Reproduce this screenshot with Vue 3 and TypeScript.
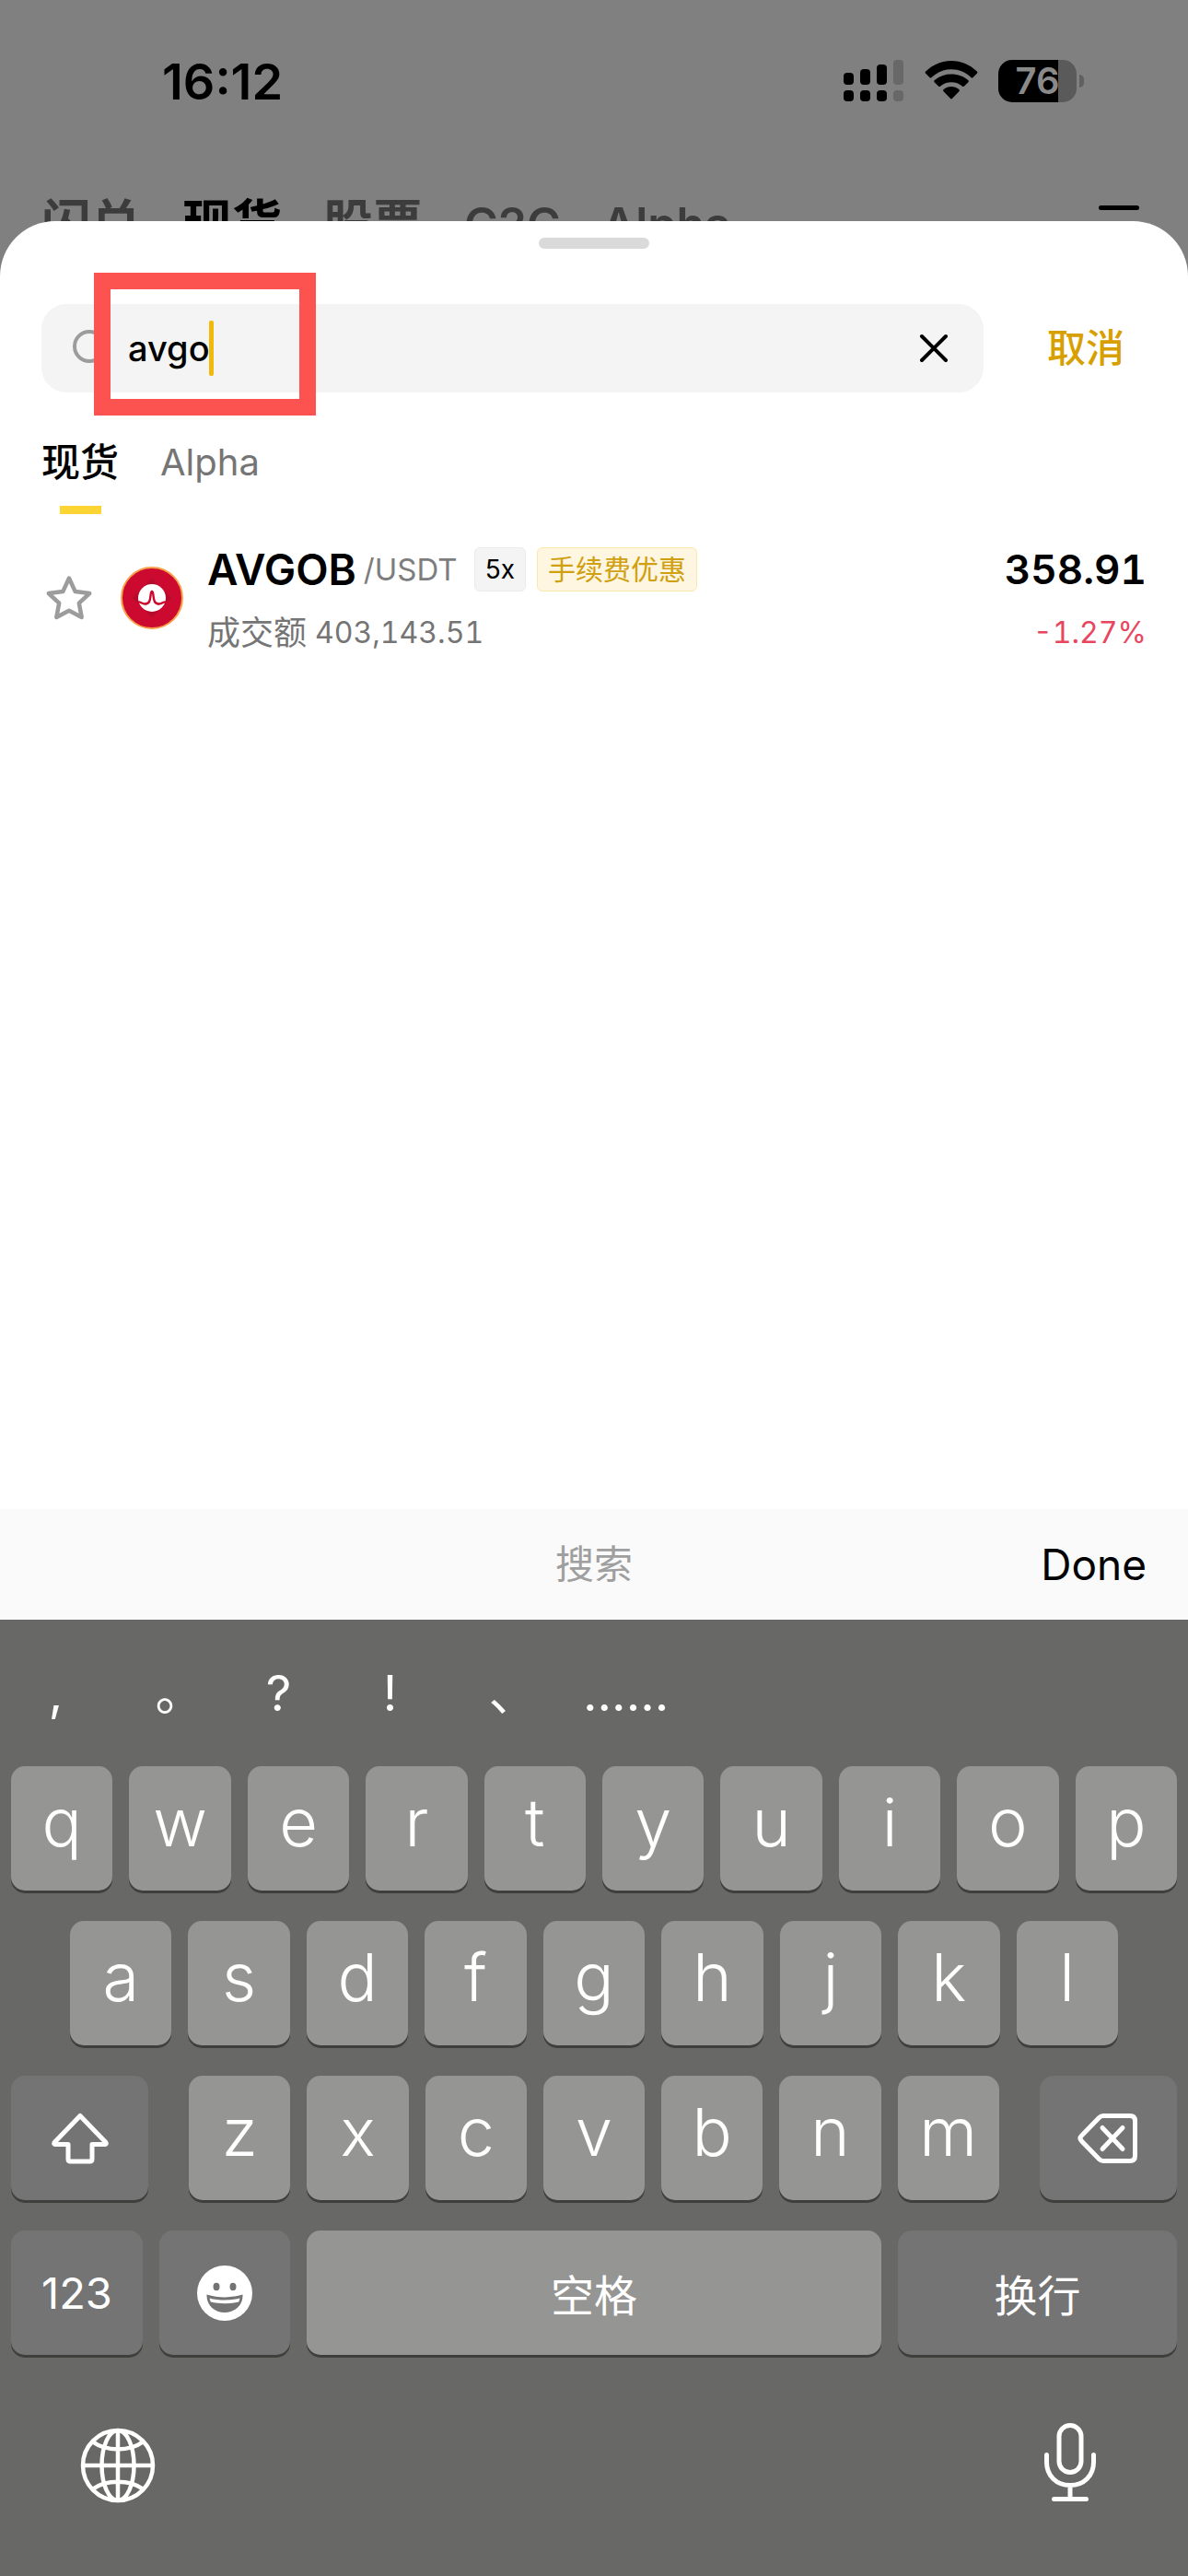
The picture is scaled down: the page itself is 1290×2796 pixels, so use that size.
<script setup lang="ts">
import { ref } from 'vue'

interface PageTab {
  label: string
  latin?: boolean
}

interface Pair {
  base: string
  quote: string
  leverage: string
  promo: string
  volume: string
  price: string
  change: string
}

const query = ref('avgo')
const pageTabs: PageTab[] = [
  { label: '闪兑' },
  { label: '现货' },
  { label: '股票' },
  { label: 'C2C', latin: true },
  { label: 'Alpha', latin: true },
]
const resultTabs: string[] = ['现货', 'Alpha']
const activeTab = ref('现货')

const pairs: Pair[] = [
  {
    base: 'AVGOB',
    quote: '/USDT',
    leverage: '5x',
    promo: '手续费优惠',
    volume: '403,143.51',
    price: '358.91',
    change: '-1.27%',
  },
]

const candidates: string[] = [',', '。', '?', '!', '、', '......']
const topRow: string[] = [...'qwertyuiop']
const homeRow: string[] = [...'asdfghjkl']
const bottomRow: string[] = [...'zxcvbnm']
</script>

<template>
  <div class="screen">
    <header class="backdrop">
      <div class="status">
        <span class="time">16:12</span>
        <div class="status-icons">
          <svg width="66" height="46" viewBox="0 0 66 46" aria-hidden="true">
            <g fill="#000">
              <rect x="0" y="14" width="11" height="13" rx="4" />
              <rect x="18" y="10" width="11" height="17" rx="4" />
              <rect x="36" y="5" width="11" height="22" rx="4" />
              <rect x="0" y="33" width="11" height="12" rx="4" />
              <rect x="18" y="33" width="11" height="12" rx="4" />
              <rect x="36" y="33" width="11" height="12" rx="4" />
            </g>
            <g fill="#686868">
              <rect x="54" y="0" width="11" height="27" rx="4" />
              <rect x="54" y="33" width="11" height="12" rx="4" />
            </g>
          </svg>
          <svg width="58" height="46" viewBox="0 0 58 46" aria-hidden="true">
            <path d="M1.2 14.8a1.6 1.6 0 0 1 0-2.3C8.800 5.200 18.400 1 29 1s20.200 4.200 27.800 11.500a1.600 1.600 0 0 1 0 2.300l-4.200 4.200a1.600 1.600 0 0 1-2.200 0C44.600 13.400 37.100 10.200 29 10.200S13.400 13.400 7.600 19a1.600 1.600 0 0 1-2.200 0z" />
            <path d="M10.800 24.400a1.600 1.600 0 0 1 0-2.300C15.600 17.800 22 15.500 29 15.500s13.400 2.300 18.200 6.600a1.600 1.600 0 0 1 0 2.300L43 28.500a1.600 1.600 0 0 1-2.200 0C37.600 25.700 33.500 24.200 29 24.200s-8.600 1.500-11.800 4.300a1.600 1.600 0 0 1-2.200 0z" />
            <path d="M20.600 34.200a1.600 1.600 0 0 1 .1-2.300C23 30 25.900 29 29 29s6 1 8.300 2.900a1.600 1.600 0 0 1 .1 2.300l-7.300 7.600a1.500 1.500 0 0 1-2.200 0z" />
          </svg>
          <div class="battery-wrap">
            <span class="battery">76</span>
            <span class="battery-nub"></span>
          </div>
        </div>
      </div>
      <nav class="page-nav">
        <a
          v-for="tab in pageTabs"
          :key="tab.label"
          href="#"
          :class="{ current: tab.label === '现货', latin: tab.latin }"
        >{{ tab.label }}</a>
        <button class="menu" type="button" aria-label="菜单">
          <svg width="60" height="52" viewBox="0 0 60 52" stroke="#000" stroke-width="5" stroke-linecap="round">
            <path d="M10.500 8.500h39M10.500 28h39M10.500 47.500h39" />
          </svg>
        </button>
      </nav>
    </header>

    <main class="sheet">
      <div class="grabber"></div>

      <form class="search-row" @submit.prevent>
        <div class="field">
          <svg class="lens" width="42" height="42" viewBox="0 0 42 42" fill="none" stroke="#9c9c9c" stroke-width="4" stroke-linecap="round">
            <circle cx="20" cy="19" r="16" />
            <path d="M32 31l6 6" />
          </svg>
          <input v-model="query" type="text" aria-label="搜索" />
          <button class="clear" type="button" aria-label="清除" @click="query = ''">
            <svg width="42" height="42" viewBox="0 0 42 42" stroke="#000" stroke-width="4" stroke-linecap="round">
              <path d="M7 8l26 26M33 8L7 34" />
            </svg>
          </button>
          <span class="caret"></span>
          <span class="highlight"></span>
        </div>
        <button class="cancel" type="button">取消</button>
      </form>

      <div class="tabs" role="tablist">
        <button
          v-for="tab in resultTabs"
          :key="tab"
          type="button"
          role="tab"
          class="tab"
          :class="{ active: tab === activeTab }"
          :aria-selected="tab === activeTab"
          @click="activeTab = tab"
        >{{ tab }}</button>
      </div>

      <ul class="pairs">
        <li v-for="pair in pairs" :key="pair.base" class="pair">
          <button class="star" type="button" aria-label="收藏">
            <svg width="60" height="60" viewBox="0 0 60 60" fill="none" stroke="#9c9c9c" stroke-width="4.500" stroke-linejoin="round">
              <path d="M30 7.500l6.700 14.600 15.500 2-11.400 10.600 2.900 15.300L30 42.700 16.300 50l2.900-15.300L7.800 24.100l15.500-2z" />
            </svg>
          </button>
          <svg class="coin" width="70" height="70" viewBox="0 0 70 70" aria-hidden="true">
            <circle cx="35" cy="34" r="33" fill="#cc092f" stroke="#f9a04a" stroke-width="2" />
            <path d="M35 13l21 21-21 21-21-21z" fill="#b50b2d" />
            <circle cx="35" cy="34" r="15" fill="#fff" />
            <path d="M20 38.500c2-1 4 2 7 2 5 0 6-3 6.500-9 .5-6 2.500-6 3 0 .5 6 1.500 9 6.500 9 3 0 5-3 7-2" fill="none" stroke="#cc092f" stroke-width="2.400" />
          </svg>
          <div class="info">
            <div class="name-line">
              <div class="symbol">
                <strong>{{ pair.base }}</strong>
                <span>{{ pair.quote }}</span>
              </div>
              <div class="tags">
                <span class="tag">{{ pair.leverage }}</span>
                <span class="tag promo">{{ pair.promo }}</span>
              </div>
            </div>
            <div class="volume">
              <span class="label">成交额</span>
              <span>{{ pair.volume }}</span>
            </div>
          </div>
          <div class="quote">
            <strong>{{ pair.price }}</strong>
            <span>{{ pair.change }}</span>
          </div>
        </li>
      </ul>
    </main>

    <div class="accessory">
      <span class="hint">搜索</span>
      <button type="button">Done</button>
    </div>

    <section class="keyboard">
      <div class="candidates">
        <button v-for="c in candidates" :key="c" type="button">{{ c }}</button>
      </div>

      <div class="rows">
        <div class="row">
          <button v-for="k in topRow" :key="k" type="button" class="key">{{ k }}</button>
        </div>
        <div class="row home">
          <button v-for="k in homeRow" :key="k" type="button" class="key">{{ k }}</button>
        </div>
        <div class="row">
          <button type="button" class="key dark shift" aria-label="Shift">
            <svg width="66" height="60" viewBox="0 0 66 60" fill="none" stroke="#fff" stroke-width="5" stroke-linejoin="round">
              <path d="M33 5.500L61 34.500q1 2-1.500 2H46v16q0 2.500-2.500 2.500h-21q-2.500 0-2.500-2.500v-16H6.500q-2.500 0-1.500-2z" />
            </svg>
          </button>
          <button v-for="k in bottomRow" :key="k" type="button" class="key">{{ k }}</button>
          <button type="button" class="key dark delete" aria-label="删除">
            <svg width="66" height="60" viewBox="0 0 66 60" fill="none" stroke="#fff" stroke-width="5" stroke-linejoin="round" stroke-linecap="round">
              <path d="M28 5.500h29q5.500 0 5.500 5.500v38q0 5.500-5.500 5.500H28q-2.500 0-4.500-2L4.500 33q-3-3 0-6l19-19.500q2-2 4.500-2z" />
              <path d="M27 18.500l22 23M49 18.500L27 41.500" />
            </svg>
          </button>
        </div>
        <div class="row">
          <button type="button" class="key dark word numbers">123</button>
          <button type="button" class="key dark emoji" aria-label="表情">
            <svg width="60" height="60" viewBox="0 0 60 60">
              <circle cx="30" cy="30" r="30" fill="#fff" />
              <g fill="#747474">
                <ellipse cx="21" cy="23" rx="3.500" ry="4.200" />
                <ellipse cx="39" cy="23" rx="3.500" ry="4.200" />
                <path d="M10.500 31.500c13 4 26 4 39 0C50 43 41 51 30 51S10 43 10.500 31.500z" />
              </g>
              <path d="M13.500 35.500c11 2.800 22 2.800 33 0l-1.200 4c-10 2.200-20.600 2.200-30.600 0z" fill="#fff" />
            </svg>
          </button>
          <button type="button" class="key word space">空格</button>
          <button type="button" class="key dark word return">换行</button>
        </div>
      </div>

      <div class="system">
        <button type="button" aria-label="切换键盘">
          <svg width="82" height="82" viewBox="0 0 82 82" fill="none" stroke="#fff" stroke-width="4.500">
            <circle cx="41" cy="41" r="38" />
            <ellipse cx="41" cy="41" rx="17.500" ry="38" />
            <path d="M41 3v76M3 41h76M14 15.500c14 10.500 40 10.500 54 0M14 66.500c14-10.500 40-10.500 54 0" />
          </svg>
        </button>
        <button type="button" aria-label="听写">
          <svg width="58" height="94" viewBox="0 0 58 94" fill="none" stroke="#fff" stroke-width="5" stroke-linecap="round">
            <rect x="17" y="3.500" width="24" height="51" rx="12" />
            <path d="M3.500 35.500v8c0 14.500 10.500 25 25.500 25s25.500-10.500 25.500-25v-8M29 68.500v14M11.500 83.500h35" />
          </svg>
        </button>
      </div>
    </section>
  </div>
</template>

<style>
body {
  background: #808080;
}
</style>

<style scoped>
.screen {
  display: flex;
  flex-direction: column;
  min-height: 100vh;
  background: #808080;
  color: #000;
  font-family: Inter, "Noto Sans CJK SC", sans-serif;
}

button,
input {
  margin: 0;
  padding: 0;
  border: 0;
  background: none;
  color: inherit;
  font: inherit;
}

svg {
  display: block;
}

.status {
  display: flex;
  align-items: center;
  justify-content: space-between;
  height: 176px;
  padding: 0 113px 0 176px;
}

.time {
  font-size: 54px;
  font-weight: 600;
}

.status-icons {
  display: flex;
  align-items: center;
  gap: 22px;
}

.battery-wrap {
  display: flex;
  align-items: center;
  gap: 3px;
}

.battery {
  width: 85px;
  height: 46px;
  border-radius: 15px;
  background: linear-gradient(to right, #000 76%, #5a5a5a 76%);
  color: #8a8a8a;
  font-size: 40px;
  font-weight: 600;
  line-height: 46px;
  text-align: center;
}

.battery-nub {
  width: 5px;
  height: 14px;
  border-radius: 0 5px 5px 0;
  background: #606060;
}

.page-nav {
  display: flex;
  align-items: center;
  gap: 45px;
  padding: 31px 45px 0;
  font-size: 54px;
  font-weight: 600;
  line-height: 72px;
}

.page-nav a {
  color: #3c3c3c;
  text-decoration: none;
}

.page-nav a.current {
  color: #000;
  font-weight: 700;
}

.page-nav a.latin {
  font-size: 50px;
}

.menu {
  margin-left: auto;
}

.sheet {
  position: relative;
  flex: 1;
  margin-top: -39px;
  padding-top: 18px;
  border-radius: 60px 60px 0 0;
  background: #fff;
}

.grabber {
  width: 120px;
  height: 12px;
  margin: 0 auto;
  border-radius: 6px;
  background: #dadada;
}

.search-row {
  display: flex;
  margin-top: 60px;
  padding-left: 45px;
}

.field {
  position: relative;
  display: flex;
  flex: 1;
  align-items: center;
  height: 96px;
  padding: 0 32px;
  border-radius: 27px;
  background: #f4f4f4;
}

.field input {
  flex: 1;
  min-width: 0;
  margin-left: 20px;
  outline: 0;
  font-size: 38px;
  font-weight: 500;
  line-height: 48px;
}

.caret {
  position: absolute;
  top: 18px;
  left: 182px;
  width: 5px;
  height: 60px;
  border-radius: 2px;
  background: #f0b90b;
}

.highlight {
  position: absolute;
  top: -34px;
  left: 57px;
  box-sizing: border-box;
  width: 241px;
  height: 155px;
  border: 18px solid #fc5250;
  pointer-events: none;
}

.cancel {
  width: 222px;
  color: #d89f00;
  font-size: 42px;
  font-weight: 500;
  line-height: 48px;
}

.tabs {
  display: flex;
  gap: 45px;
  margin-top: 46px;
  padding: 0 45px;
}

.tab {
  display: flex;
  flex-direction: column;
  align-items: center;
  gap: 17px;
  color: #757575;
  font-size: 40px;
  line-height: 60px;
}

.tab.active {
  color: #000;
  font-size: 42px;
  font-weight: 500;
}

.tab::after {
  width: 45px;
  height: 9px;
  content: "";
}

.tab.active::after {
  background: #fcd535;
}

.pairs {
  margin: 36px 0 0;
  padding: 0;
  list-style: none;
}

.pair {
  display: flex;
  align-items: center;
  gap: 25px;
  padding: 0 45px;
}

.info {
  flex: 1;
}

.name-line {
  display: flex;
  align-items: center;
  gap: 18px;
  height: 48px;
}

.symbol {
  display: flex;
  align-items: center;
  gap: 8px;
}

.symbol strong {
  font-size: 46px;
  font-weight: 600;
  line-height: 48px;
}

.symbol span {
  color: #7d7d7d;
  font-size: 33px;
}

.tags {
  display: flex;
  gap: 12px;
}

.tag {
  box-sizing: border-box;
  height: 48px;
  padding: 0 11px;
  border: 1px solid #ebebeb;
  border-radius: 6px;
  background: #f4f4f4;
  font-size: 28px;
  line-height: 46px;
}

.tag.promo {
  border-color: #fbe8ad;
  background: #fef6e0;
  color: #d0a010;
  font-size: 30px;
}

.volume {
  display: flex;
  gap: 9px;
  margin-top: 27px;
  color: #757575;
  font-size: 32px;
  font-variant-numeric: tabular-nums;
  line-height: 36px;
}

.volume .label {
  font-size: 36px;
}

.quote {
  display: flex;
  flex-direction: column;
  align-items: flex-end;
  font-variant-numeric: tabular-nums;
}

.quote strong {
  font-size: 44px;
  font-weight: 600;
  line-height: 48px;
}

.quote span {
  margin-top: 27px;
  color: #e8465f;
  font-size: 32px;
  line-height: 36px;
}

.accessory {
  display: grid;
  grid-template-columns: 1fr auto 1fr;
  align-items: center;
  height: 120px;
  padding: 0 45px;
  background: #fafafa;
  line-height: 60px;
}

.hint {
  grid-column: 2;
  color: #9f9f9f;
  font-size: 42px;
}

.accessory button {
  justify-self: end;
  font-size: 46px;
}

.keyboard {
  background: #686866;
  color: #fff;
}

.candidates {
  display: flex;
  height: 159px;
}

.candidates button {
  min-width: 121px;
  padding: 0 16px;
  font-size: 54px;
  font-feature-settings: "palt";
  line-height: 72px;
}

.candidates button:last-child {
  padding: 0 28px;
}

.rows {
  display: flex;
  flex-direction: column;
  gap: 33px;
  padding: 0 12px;
}

.row {
  display: flex;
  gap: 18px;
}

.row.home {
  padding: 0 64px;
}

.key {
  display: flex;
  flex: 110 1 0;
  align-items: center;
  justify-content: center;
  box-sizing: border-box;
  min-width: 0;
  height: 135px;
  padding-bottom: 14px;
  border-radius: 15px;
  background: #959593;
  box-shadow: 0 3px 0 #3f3f3d;
  font-size: 72px;
  font-weight: 300;
}

.key.dark {
  padding-bottom: 0;
  background: #747474;
}

.key.word {
  padding-bottom: 0;
  font-size: 47px;
  font-weight: 400;
}

.key.shift {
  flex-grow: 149;
  margin-right: 26px;
}

.key.delete {
  flex-grow: 149;
  margin-left: 26px;
}

.key.numbers {
  flex-grow: 143;
}

.key.emoji {
  flex-grow: 142;
}

.key.space {
  flex-grow: 624;
}

.key.return {
  flex-grow: 303;
}

.system {
  display: flex;
  align-items: center;
  justify-content: space-between;
  height: 240px;
  padding: 0 99px 0 87px;
}
</style>
